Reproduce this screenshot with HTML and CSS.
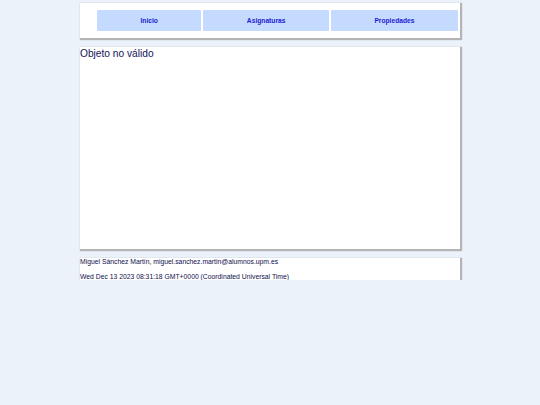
FILE: index.html
```html
<!DOCTYPE html>
<html lang="es">
<head>
<meta charset="utf-8">
<title>Objeto no válido</title>
<link rel="stylesheet" href="styles.css">
</head>
<body>
<div class="page">
  <header class="card header">
    <nav class="nav">
      <a class="nav-item" href="#">Inicio</a>
      <a class="nav-item" href="#">Asignaturas</a>
      <a class="nav-item" href="#">Propiedades</a>
    </nav>
  </header>
  <main class="card main">
    <h1 class="title">Objeto no válido</h1>
  </main>
  <footer class="card footer">
    <p class="foot-line">Miguel Sánchez Martín, miguel.sanchez.martin@alumnos.upm.es</p>
    <p class="foot-line">Wed Dec 13 2023 08:31:18 GMT+0000 (Coordinated Universal Time)</p>
  </footer>
</div>
</body>
</html>
```

FILE: styles.css
```css
html, body {
  margin: 0;
  padding: 0;
  background: #ebf2fa;
  font-family: "Liberation Sans", Arial, sans-serif;
}
.page {
  width: 380px;
  margin: 0 auto;
  padding-top: 3px;
  display: flex;
  flex-direction: column;
}
.card {
  background: #ffffff;
  box-shadow: 1px 1px 1px 1px #b4b4b4;
}
.header {
  padding: 7px 2px 7px 17px;
}
.nav {
  display: flex;
  gap: 2px;
}
.nav-item {
  flex: 1 1 auto;
  background: #c5daff;
  border-radius: 1px;
  height: 21px;
  display: flex;
  align-items: center;
  justify-content: center;
  color: #1b1bd0;
  font-weight: bold;
  font-size: 6.7px;
  text-decoration: none;
}
.main {
  margin-top: 9px;
  height: 202px;
}
.title {
  margin: 0;
  padding-top: 1px;
  font-weight: normal;
  font-size: 10.2px;
  color: #14145a;
  line-height: 12px;
}
.footer {
  margin-top: 9px;
  height: 22px;
}
.foot-line {
  margin: 0;
  font-size: 6.8px;
  color: #10104e;
  line-height: 7.5px;
}
.foot-line + .foot-line {
  margin-top: 7px;
}
```
